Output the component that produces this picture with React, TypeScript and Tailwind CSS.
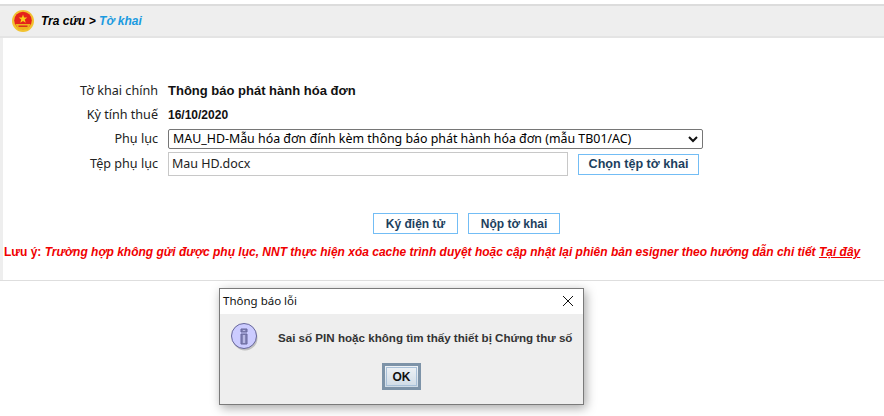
const label = "w-[155px] text-right text-[12.6px] font-['Noto_Sans',sans-serif] text-[#222]";
const blueButton = "h-[21px] border border-[#73bdf5] font-bold text-[#1d3f5e] leading-none";

export default function App() {
  return (
    <div className="relative w-[884px] h-[416px] overflow-hidden bg-white font-['Liberation_Sans',sans-serif]">
      <div className="h-[4px]" />
      <div className="h-[2px] bg-[#dcdcdc]" />
      <header className="h-[32px] bg-[#eeeeee] border-b-2 border-[#e4e4e4] flex items-center pl-[12px] gap-[7px]">
        <svg width="22" height="22" viewBox="0 0 22 22">
          <circle cx="11" cy="11" r="11" fill="#f2c230" />
          <circle cx="11" cy="10.5" r="8.8" fill="#e5231b" />
          <path d="M11 4.5l1.1 3 3.2.1-2.5 2 .9 3.1L11 11l-2.7 1.7.9-3.1-2.5-2 3.2-.1z" fill="#f7d117" />
          <path d="M3.5 14h15l-2.5 5.5H6z" fill="#eeb21d" />
          <path d="M6.5 15.5h9v1.4h-9z" fill="#d9281c" />
        </svg>
        <div className="text-[12px] italic font-bold leading-none">
          <span className="text-black">Tra cứu &gt; </span>
          <span className="text-[#1a9ae0]">Tờ khai</span>
        </div>
      </header>
      <main className="border-l-[3px] border-[#eeeeee] h-[242px] pt-[43px]">
        <div className="flex items-center h-[20px]">
          <div className={label}>Tờ khai chính</div>
          <div className="ml-[10px] text-[13px] font-bold text-[#111]">Thông báo phát hành hóa đơn</div>
        </div>
        <div className="flex items-center h-[22px] mt-[3px]">
          <div className={label}>Kỳ tính thuế</div>
          <div className="ml-[10px] text-[12px] font-bold text-[#111]">16/10/2020</div>
        </div>
        <div className="flex items-center h-[20px] mt-[3px]">
          <div className={label}>Phụ lục</div>
          <div className="ml-[10px] w-[535px] h-[20px] border border-[#767676] rounded-[2px] flex items-center justify-between pl-[4px] pr-[3px] text-[12.4px] font-['Noto_Sans',sans-serif] text-black">
            <span>MAU_HD-Mẫu hóa đơn đính kèm thông báo phát hành hóa đơn (mẫu TB01/AC)</span>
            <svg width="12" height="12" viewBox="0 0 12 12" fill="none" stroke="#111" strokeWidth="2"><path d="M2 4l4 4 4-4" /></svg>
          </div>
        </div>
        <div className="flex items-center h-[24px] mt-[3px]">
          <div className={label}>Tệp phụ lục</div>
          <div className="ml-[10px] w-[400px] h-[24px] border border-[#c8c8c8] flex items-center pl-[3px] text-[12.5px] font-['Noto_Sans',sans-serif] text-[#222]">Mau HD.docx</div>
          <button className={`ml-[10px] w-[121px] text-[12.6px] ${blueButton}`}>Chọn tệp tờ khai</button>
        </div>
        <div className="flex gap-[10px] mt-[37px] pl-[370px]">
          <button className={`w-[85px] text-[12px] ${blueButton}`}>Ký điện tử</button>
          <button className={`w-[92px] text-[12px] ${blueButton}`}>Nộp tờ khai</button>
        </div>
        <div className="mt-[9px] pl-[1px] text-[12px] font-bold italic text-[#f00000] whitespace-nowrap">
          <span className="not-italic">Lưu ý: </span>Trường hợp không gửi được phụ lục, NNT thực hiện xóa cache trình duyệt hoặc cập nhật lại phiên bản esigner theo hướng dẫn chi tiết <span className="underline">Tại đây</span>
        </div>
      </main>
      <div className="h-[1px] bg-[#dedede]" />
      <div className="absolute left-[219px] top-[288px] w-[365px] h-[117px] border border-[#7a7a7a] bg-[#eeeeee] shadow-[2px_3px_10px_rgba(0,0,0,0.35)]">
        <div className="h-[25px] bg-white flex items-center justify-between pl-[3px] pr-[9px] pb-[2px] text-[11.5px] font-['Noto_Sans',sans-serif] text-[#111]">
          <span>Thông báo lỗi</span>
          <svg width="12" height="12" viewBox="0 0 12 12" stroke="#111" strokeWidth="1"><path d="M1 1l10 10M11 1L1 11" /></svg>
        </div>
        <div className="flex items-start pl-[11px] mt-[9px]">
          <svg width="28" height="29" viewBox="0 0 28 29">
            <circle cx="14" cy="15" r="12.5" fill="#555" opacity="0.3" />
            <circle cx="13" cy="13" r="12.5" fill="#ccccff" stroke="#66669a" />
            <path d="M10 6h6v3h-6zM10 11h6v10h-6z" fill="#8585b8" stroke="#66669a" />
            <path d="M12 7h2v1h-2zM12 12h2v8h-2z" fill="#b8b8e4" />
          </svg>
          <div className="ml-[19px] mt-[6px] text-[11.6px] font-bold text-[#333]">Sai số PIN hoặc không tìm thấy thiết bị Chứng thư số</div>
        </div>
        <div className="flex justify-center mt-[11px]">
          <button className="w-[39px] h-[27px] border-[3px] border-[#7d93a8] bg-gradient-to-b from-[#eef2f6] to-[#cfdbe6] p-[1px] text-[12px] font-bold text-[#111] leading-none">
            <span className="flex items-center justify-center h-full border border-[#a8c0d8]">OK</span>
          </button>
        </div>
      </div>
    </div>
  );
}
